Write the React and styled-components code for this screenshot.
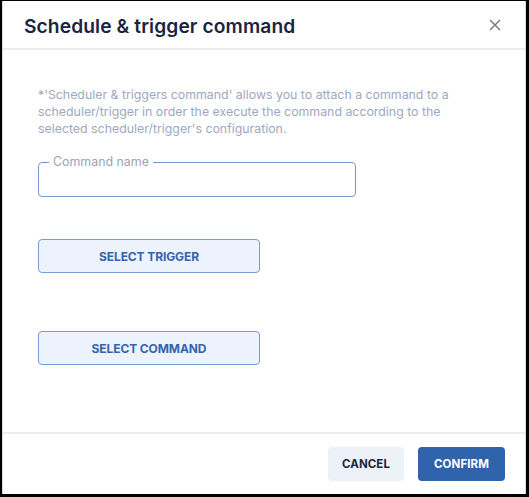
import React from "react";
import styled, { createGlobalStyle } from "styled-components";

const Global = createGlobalStyle`
  html, body { margin: 0; padding: 0; background: #fff; }
  body { font-family: Inter, "Noto Sans", sans-serif; }
  * { box-sizing: border-box; }
`;

const Frame = styled.div`
  width: 529px;
  height: 497px;
  border-style: solid;
  border-color: #000;
  border-width: 1px 3px 3px 2px;
  background: #fff;
  display: flex;
  flex-direction: column;
`;

const Inner = styled.div`
  flex: 1;
  display: flex;
  flex-direction: column;
  border-left: 1px solid #d8d8d8;
  border-right: 1px solid #d8d8d8;
`;

const Header = styled.div`
  height: 49px;
  display: flex;
  align-items: center;
  justify-content: space-between;
  padding: 0 22px 0 21px;
  border-bottom: 2px solid #ececec;
`;

const Title = styled.h1`
  margin: 0;
  font-size: 19.2px;
  font-weight: 600;
  color: #1b2440;
  letter-spacing: 0.1px;
  padding-top: 2px;
`;

const Close = styled.button`
  border: 0;
  background: none;
  padding: 0;
  width: 16px;
  height: 16px;
  display: flex;
  align-items: center;
  justify-content: center;
  cursor: pointer;
`;

const Body = styled.div`
  flex: 1;
  padding: 36px 35px 0 35px;
  display: flex;
  flex-direction: column;
  align-items: flex-start;
`;

const Desc = styled.p`
  margin: 0;
  font-size: 12.35px;
  line-height: 17px;
  color: #9ea8bd;
  width: 440px;
`;

const Field = styled.fieldset`
  margin: 20px 0 0 0;
  width: 318px;
  height: 40px;
  border: 1px solid #7896d0;
  border-radius: 4px;
  padding: 0 10px;
`;

const Legend = styled.legend`
  font-size: 12.4px;
  color: #9aa4b8;
  padding: 0 4px;
  margin-left: 0;
  line-height: 10px;
`;

const SelectButton = styled.button`
  width: 222px;
  height: 34px;
  margin-top: ${(p) => p.$gap}px;
  background: #edf3fd;
  border: 1px solid #7a9bd6;
  border-radius: 4px;
  color: #3563ad;
  font-family: Inter, sans-serif;
  font-size: 12px;
  font-weight: 700;
  letter-spacing: -0.1px;
  cursor: pointer;
`;

const Footer = styled.div`
  height: 62px;
  border-top: 2px solid #ececec;
  display: flex;
  align-items: center;
  justify-content: flex-end;
  gap: 14px;
  padding: 0 20px 0 0;
`;

const FooterButton = styled.button`
  height: 34px;
  width: ${(p) => p.$w}px;
  border: 0;
  border-radius: 4px;
  background: ${(p) => (p.$primary ? "#2f63ab" : "#edf1f8")};
  color: ${(p) => (p.$primary ? "#ffffff" : "#1b2440")};
  font-family: Inter, sans-serif;
  font-size: 11.5px;
  font-weight: 700;
  letter-spacing: 0.1px;
  cursor: pointer;
`;

export default function App() {
  return (
    <>
      <Global />
      <Frame>
        <Inner>
          <Header>
            <Title>Schedule &amp; trigger command</Title>
            <Close aria-label="close">
              <svg width="12" height="12" viewBox="0 0 12 12">
                <path d="M1 1 L11 11 M11 1 L1 11" stroke="#6f7785" strokeWidth="1.4" fill="none" />
              </svg>
            </Close>
          </Header>
          <Body>
            <Desc>
              *'Scheduler &amp; triggers command' allows you to attach a command to a
              scheduler/trigger in order the execute the command according to the
              selected scheduler/trigger's configuration.
            </Desc>
            <Field>
              <Legend>Command name</Legend>
            </Field>
            <SelectButton $gap={42}>SELECT TRIGGER</SelectButton>
            <SelectButton $gap={58}>SELECT COMMAND</SelectButton>
          </Body>
          <Footer>
            <FooterButton $w={76}>CANCEL</FooterButton>
            <FooterButton $w={87} $primary>CONFIRM</FooterButton>
          </Footer>
        </Inner>
      </Frame>
    </>
  );
}
